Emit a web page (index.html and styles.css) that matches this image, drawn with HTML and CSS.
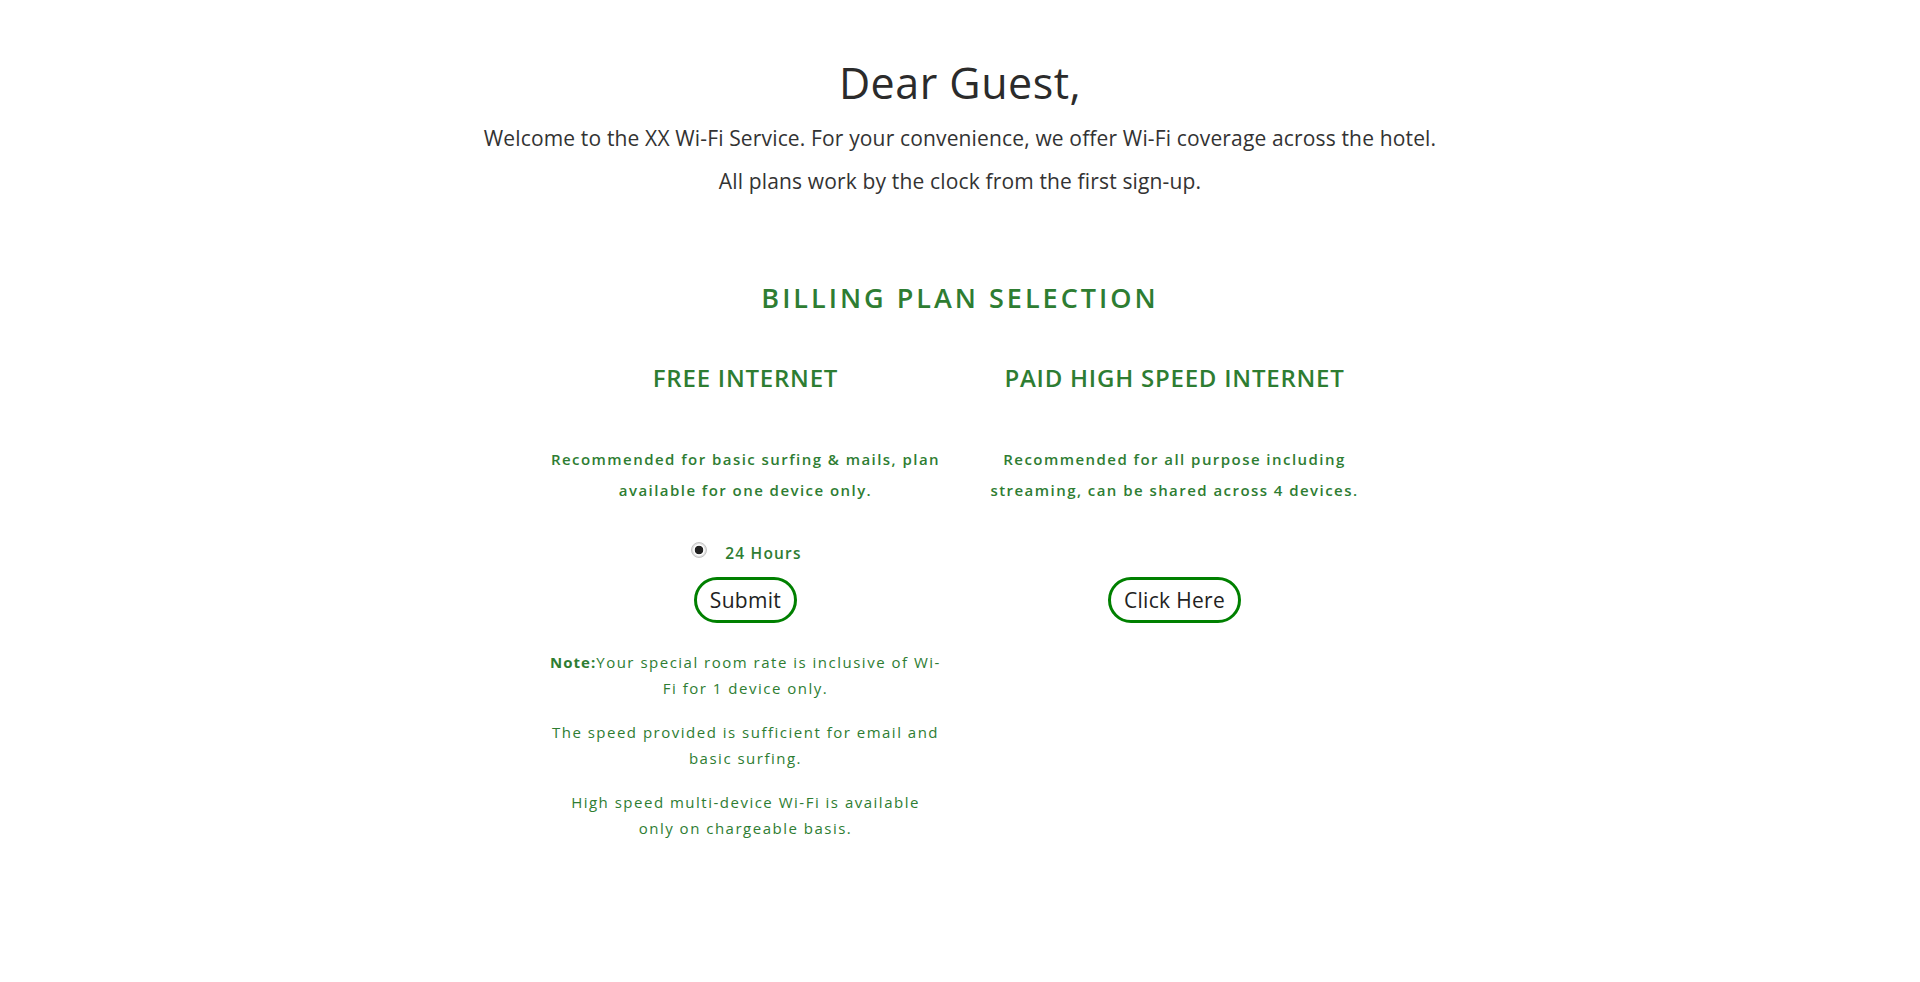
FILE: index.html
```html
<!DOCTYPE html>
<html lang="en">
<head>
<meta charset="utf-8">
<title>Wi-Fi Service</title>
<link rel="stylesheet" href="styles.css">
</head>
<body>
<main class="page">
  <header class="intro">
    <h1 class="greeting">Dear Guest,</h1>
    <p class="lead">Welcome to the XX Wi-Fi Service. For your convenience, we offer Wi-Fi coverage across the hotel.</p>
    <p class="lead">All plans work by the clock from the first sign-up.</p>
  </header>

  <section class="billing">
    <h2 class="billing-title">BILLING PLAN SELECTION</h2>
    <div class="plans">
      <div class="plan">
        <h3 class="plan-title">FREE INTERNET</h3>
        <p class="plan-desc">Recommended for basic surfing &amp; mails, plan available for one device only.</p>
        <label class="plan-option">
          <input class="radio" type="radio" name="plan" checked>
          <span class="option-label">24 Hours</span>
        </label>
        <button class="pill-btn" type="button">Submit</button>
        <div class="notes">
          <p class="note"><strong>Note:</strong>Your special room rate is inclusive of Wi-<br>Fi for 1 device only.</p>
          <p class="note">The speed provided is sufficient for email and basic surfing.</p>
          <p class="note">High speed multi-device Wi-Fi is available<br>only on chargeable basis.</p>
        </div>
      </div>
      <div class="plan">
        <h3 class="plan-title">PAID HIGH SPEED INTERNET</h3>
        <p class="plan-desc">Recommended for all purpose including streaming, can be shared across 4 devices.</p>
        <div class="plan-option plan-option-empty"></div>
        <button class="pill-btn" type="button">Click Here</button>
      </div>
    </div>
  </section>
</main>
</body>
</html>
```
FILE: styles.css
```css
html, body {
  margin: 0;
  padding: 0;
  background: #ffffff;
}

body {
  font-family: "Open Sans", "DejaVu Sans", sans-serif;
  color: #333333;
  text-align: center;
}

.page {
  padding-top: 58px;
}

.greeting {
  margin: 0;
  font-size: 43px;
  line-height: 50px;
  font-weight: 400;
  color: #2b2b2b;
  letter-spacing: 0.5px;
}

.lead {
  margin: 0;
  font-size: 21px;
  line-height: 43px;
  font-weight: 400;
  color: #333333;
  letter-spacing: 0.15px;
}

.intro .lead:first-of-type {
  margin-top: 9px;
}

.billing {
  margin-top: 77px;
}

.billing-title {
  margin: 0;
  font-size: 27px;
  line-height: 36px;
  font-weight: 600;
  color: #2e7d32;
  letter-spacing: 3px;
}

.plans {
  width: 858px;
  margin: 46px auto 0;
  display: grid;
  grid-template-columns: 1fr 1fr;
}

.plan {
  display: flex;
  flex-direction: column;
  align-items: center;
  padding: 0 17px;
}

.plan-title {
  margin: 0;
  font-size: 24px;
  line-height: 32px;
  font-weight: 600;
  color: #2e7d32;
  letter-spacing: 0.78px;
}

.plan-desc {
  margin: 50px 0 0;
  font-size: 15px;
  line-height: 31px;
  font-weight: 600;
  color: #2e7d32;
  letter-spacing: 1.45px;
}

.plan-option {
  margin-top: 35px;
  height: 24px;
  display: flex;
  align-items: center;
  gap: 18px;
  padding-left: 2px;
}

.radio {
  appearance: none;
  -webkit-appearance: none;
  margin: 0 0 7px;
  width: 16px;
  height: 16px;
  border-radius: 50%;
  border: 1px solid #c4c4c4;
  background: radial-gradient(circle, #222222 0 4px, #ffffff 4.6px 5.4px, #e2e2e2 6px);
}

.option-label {
  font-size: 15.5px;
  font-weight: 600;
  color: #2e7d32;
  letter-spacing: 1.2px;
}

.pill-btn {
  margin-top: 12px;
  height: 46px;
  padding: 0 13px;
  border: 3px solid #008000;
  border-radius: 23px;
  background: #ffffff;
  font-family: "Open Sans", "DejaVu Sans", sans-serif;
  font-size: 21px;
  font-weight: 400;
  color: #222222;
  letter-spacing: 0.3px;
  cursor: pointer;
}

.notes {
  margin-top: 26px;
  display: flex;
  flex-direction: column;
  gap: 18px;
}

.note {
  margin: 0;
  font-size: 15px;
  line-height: 26px;
  font-weight: 400;
  color: #2e7d32;
  letter-spacing: 1.5px;
}

.note strong {
  font-weight: 700;
  letter-spacing: 1px;
}
```
